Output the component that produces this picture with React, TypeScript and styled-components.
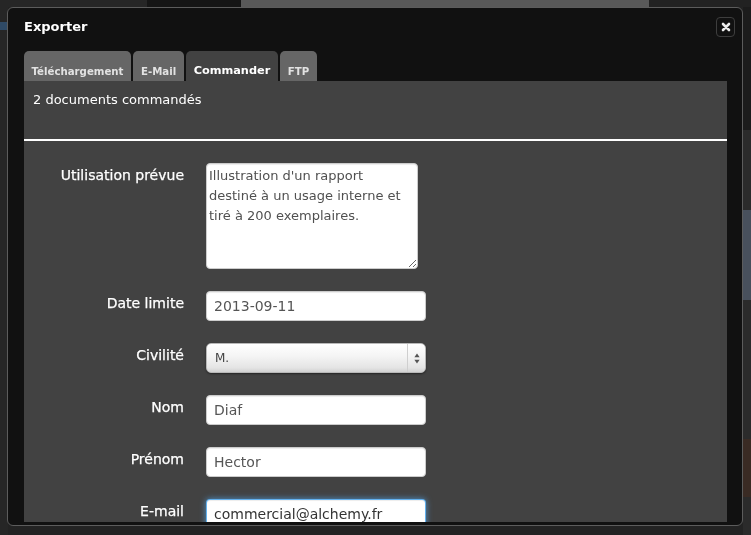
import React from "react";
import styled, { createGlobalStyle } from "styled-components";

const Global = createGlobalStyle`
  html, body { margin: 0; padding: 0; background: #222; overflow: hidden; }
  #root { width: 751px; height: 535px; }
  * { box-sizing: border-box; }
`;

const FONT = `"DejaVu Sans", Verdana, sans-serif`;

/* ---------- page behind the dialog ---------- */
const Page = styled.div`
  width: 751px;
  height: 535px;
  display: flex;
  flex-direction: column;
  background: #232323;
`;
const TopStrip = styled.div`
  height: 7px;
  display: flex;
`;
const StripSeg = styled.div<{ $w?: number; $c: string }>`
  flex: ${(p) => (p.$w ? `0 0 ${p.$w}px` : "1")};
  background: ${(p) => p.$c};
`;
const Middle = styled.div`
  flex: 1;
  display: flex;
  justify-content: space-between;
`;
const SideStrip = styled.div`
  width: 8px;
  display: flex;
  flex-direction: column;
`;
const SideBlock = styled.div<{ $h?: number; $c: string }>`
  flex: ${(p) => (p.$h ? `0 0 ${p.$h}px` : "1")};
  background: ${(p) => p.$c};
`;

/* ---------- dialog ---------- */
const Modal = styled.div`
  position: fixed;
  left: 7px;
  top: 7px;
  width: 736px;
  height: 519px;
  background: #111;
  border: 1px solid #5c5c5c;
  border-radius: 6px;
  display: flex;
  flex-direction: column;
  overflow: hidden;
  font-family: ${FONT};
`;
const Header = styled.div`
  display: flex;
  align-items: center;
  justify-content: space-between;
  padding: 9px 7px 0 16px;
`;
const Title = styled.h3`
  margin: 0;
  font-size: 13px;
  line-height: 16px;
  font-weight: bold;
  color: #fff;
`;
const CloseButton = styled.button`
  width: 19px;
  height: 20px;
  padding: 0;
  background: #111;
  border: 1px solid #3e3e3e;
  border-radius: 4px;
  display: flex;
  align-items: center;
  justify-content: center;
`;
const TabBar = styled.div`
  display: flex;
  gap: 2.5px;
  margin: 14px 15px 0 16px;
`;
const Tab = styled.div<{ $active?: boolean }>`
  height: 30px;
  padding: ${(p) => (p.$active ? "14px 7.5px 0" : "14.5px 7.5px 0")};
  border-radius: 5px 5px 0 0;
  background: ${(p) => (p.$active ? "#424242" : "#666")};
  color: ${(p) => (p.$active ? "#fff" : "#e2e2e2")};
  font-size: ${(p) => (p.$active ? "11.3px" : "10.2px")};
  line-height: 12px;
  font-weight: bold;
  white-space: nowrap;
`;
const Panel = styled.div`
  flex: 1;
  margin: 0 15px 3px 16px;
  background: #424242;
  overflow: hidden;
`;
const Summary = styled.div`
  height: 60px;
  padding: 11px 9px 0;
  font-size: 13px;
  line-height: 16px;
  color: #fff;
  border-bottom: 2px solid #fff;
`;
const Form = styled.div`
  display: grid;
  grid-template-columns: 160px 1fr;
  column-gap: 22px;
  row-gap: 22px;
  padding-top: 22px;
`;
const Label = styled.label`
  text-align: right;
  font-size: 14px;
  line-height: 20px;
  padding-top: 2px;
  color: #fff;
  -webkit-text-stroke: 0.25px #fff;
`;
const TextArea = styled.textarea`
  display: block;
  width: 212px;
  height: 106px;
  margin: 0;
  padding: 2px 2px;
  font-family: ${FONT};
  font-size: 13px;
  line-height: 20px;
  color: #505050;
  background: #fff;
  border: 1px solid #ccc;
  border-radius: 4px;
  box-shadow: inset 0 1px 1px rgba(0, 0, 0, 0.075);
  outline: none;
`;
const Input = styled.input<{ $focused?: boolean }>`
  display: block;
  width: 220px;
  height: 30px;
  margin: 0;
  padding: 0 7px;
  font-family: ${FONT};
  font-size: 14px;
  color: ${(p) => (p.$focused ? "#333" : "#555")};
  background: #fff;
  border: 1px solid ${(p) => (p.$focused ? "rgba(82,168,236,0.9)" : "#ccc")};
  border-radius: 4px;
  outline: none;
  box-shadow: ${(p) =>
    p.$focused
      ? "inset 0 1px 1px rgba(0,0,0,.075), 0 0 6px rgba(82,168,236,.8)"
      : "inset 0 1px 1px rgba(0,0,0,.075)"};
`;
const SelectWrap = styled.div`
  position: relative;
  width: 220px;
  height: 30px;
`;
const Select = styled.select`
  appearance: none;
  -webkit-appearance: none;
  display: block;
  width: 100%;
  height: 30px;
  margin: 0;
  padding: 0 0 0 8px;
  font-family: ${FONT};
  font-size: 12px;
  color: #444;
  border: 1px solid #b8b8b8;
  border-radius: 5px;
  background: linear-gradient(#ffffff 0%, #f4f4f4 45%, #e4e4e4 85%, #d2d2d2 100%);
  box-shadow: 0 1px 2px rgba(0, 0, 0, 0.45);
  outline: none;
`;
const SelectArrows = styled.div`
  position: absolute;
  right: 1px;
  top: 1px;
  bottom: 1px;
  width: 18px;
  border-left: 1px solid #cfcfcf;
  display: flex;
  align-items: center;
  justify-content: center;
  pointer-events: none;
`;

const tabs = ["Téléchargement", "E-Mail", "Commander", "FTP"];

export default function App() {
  return (
    <>
      <Global />
      <Page>
        <TopStrip>
          <StripSeg $w={147} $c="#262626" />
          <StripSeg $w={94} $c="#151515" />
          <StripSeg $w={408} $c="#595959" />
          <StripSeg $c="#222" />
        </TopStrip>
        <Middle>
          <SideStrip>
            <SideBlock $h={15} $c="#262626" />
            <SideBlock $h={8} $c="#2f4a66" />
            <SideBlock $c="#262626" />
          </SideStrip>
          <SideStrip>
            <SideBlock $h={123} $c="#1c1c1c" />
            <SideBlock $h={80} $c="#2b2b2b" />
            <SideBlock $h={90} $c="#48505c" />
            <SideBlock $h={139} $c="#2b2b2b" />
            <SideBlock $h={58} $c="#3a2b24" />
            <SideBlock $c="#2b2b2b" />
          </SideStrip>
        </Middle>
      </Page>

      <Modal>
        <Header>
          <Title>Exporter</Title>
          <CloseButton aria-label="Fermer">
            <svg width="10" height="10" viewBox="0 0 10 10">
              <path
                d="M2 2 L8 8 M8 2 L2 8"
                stroke="#ececec"
                strokeWidth="2.6"
                strokeLinecap="round"
              />
            </svg>
          </CloseButton>
        </Header>
        <TabBar>
          {tabs.map((t) => (
            <Tab key={t} $active={t === "Commander"}>
              {t}
            </Tab>
          ))}
        </TabBar>
        <Panel>
          <Summary>2 documents commandés</Summary>
          <Form>
            <Label>Utilisation prévue</Label>
            <div>
              <TextArea
                defaultValue={
                  "Illustration d'un rapport destiné à un usage interne et tiré à 200 exemplaires."
                }
              />
            </div>

            <Label>Date limite</Label>
            <Input defaultValue="2013-09-11" />

            <Label>Civilité</Label>
            <SelectWrap>
              <Select defaultValue="M.">
                <option>M.</option>
                <option>Mme</option>
                <option>Mlle</option>
              </Select>
              <SelectArrows>
                <svg width="6" height="11" viewBox="0 0 6 11">
                  <path d="M3 0.5 L5.6 4.2 L0.4 4.2 Z" fill="#555" />
                  <path d="M3 10.5 L5.6 6.8 L0.4 6.8 Z" fill="#555" />
                </svg>
              </SelectArrows>
            </SelectWrap>

            <Label>Nom</Label>
            <Input defaultValue="Diaf" />

            <Label>Prénom</Label>
            <Input defaultValue="Hector" />

            <Label>E-mail</Label>
            <Input $focused defaultValue="commercial@alchemy.fr" />
          </Form>
        </Panel>
      </Modal>
    </>
  );
}
